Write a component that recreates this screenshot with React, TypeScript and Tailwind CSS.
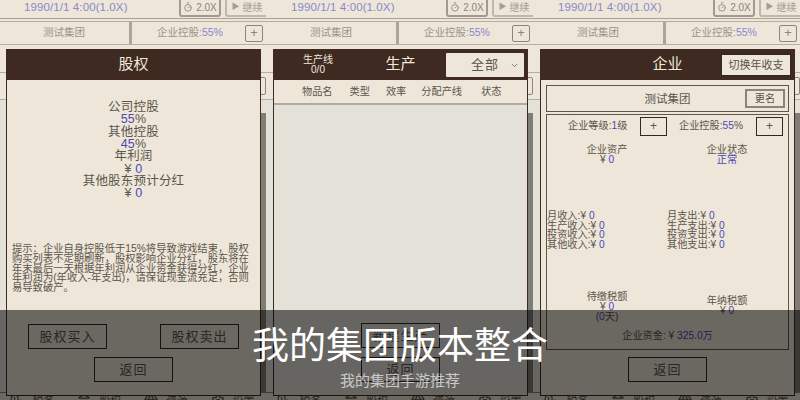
import React from 'react';
import { Timer, ChevronDown, Coins, Landmark, Gem, Settings } from 'lucide-react';

const ink = 'text-[#5c554b]';
const blue = 'text-[#4b48b4]';

const Num: React.FC<{ children: React.ReactNode }> = ({ children }) => <span className={blue}>{children}</span>;

const Money: React.FC<{ value: string }> = ({ value }) => (
  <span>
    ¥<Num> {value}</Num>
  </span>
);

const PageBehind: React.FC = () => (
  <div className="flex flex-col h-full">
    <div className="flex items-start h-[19px] border-b border-[#a8a297] shrink-0">
      <span className="ml-[25px] mt-[1px] text-[11.5px] leading-[12px] tracking-[0.1px] text-[#8a88cc] whitespace-nowrap">1990/1/1 4:00(1.0X)</span>
      <div className="ml-auto flex gap-[4px] -mt-[3px]">
        <div className="w-[42px] h-[20px] border-2 border-[#a09a8f] rounded-[3px] flex items-center justify-center gap-[3px] text-[10px] text-[#8b857a]">
          <Timer size={10} />
          2.0X
        </div>
        <div className="w-[44px] -mr-[3px] h-[20px] border-2 border-[#bdb7ac] rounded-[3px] flex items-center justify-center gap-[3px] text-[10px] text-[#a49e93]">
          <span className="text-[8px]">▶</span>
          继续
        </div>
      </div>
    </div>
    <div className="flex h-[24px] mt-[2px] border-y border-[#b3ada2] shrink-0 text-[10.5px] text-[#9a948a]">
      <div className="w-[132px] flex items-center justify-center border-r-2 border-[#aaa49a]">测试集团</div>
      <div className="flex-1 flex items-center border-l border-[#aaa49a]">
        <span className="ml-[25px] whitespace-nowrap">
          企业控股:<span className="text-[#8a88cc]">55%</span>
        </span>
        <span className="ml-auto mr-[3px] w-[18px] h-[17px] border border-[#8b857a] rounded-[2px] flex items-center justify-center text-[#8b857a] text-[13px]">+</span>
      </div>
    </div>
    <div className="mt-[27px] h-[28px] border-y border-[#b3ada2] shrink-0 flex justify-end items-center">
      <div className="w-[18px] h-[18px] border border-[#8b857a] rounded-[2px]" />
    </div>
    <div className="flex-1 bg-[#e4e1d9] relative min-h-0">
      <div className="absolute right-0 top-[13px] bottom-0 w-[5px] bg-[#807c76]" />
    </div>
    <div className="h-[8px] shrink-0 border-t border-[#8b857a] flex text-[11px] leading-[14px] text-[#5c554b] overflow-hidden">
      {[
        { label: '税务', icon: Coins },
        { label: '股权', icon: Landmark },
        { label: '资源', icon: Gem },
        { label: '设置', icon: Settings },
      ].map(({ label, icon: Icon }) => (
        <div key={label} className="flex-1 flex justify-center gap-[8px] pt-[1px]">
          <Icon size={14} />
          <span>{label}</span>
        </div>
      ))}
    </div>
  </div>
);

const Dialog: React.FC<{ header: React.ReactNode; children: React.ReactNode }> = ({ header, children }) => (
  <div className="absolute left-[7px] top-[49px] w-[255px] h-[347px] border border-[#3e2a20] bg-[#ede6d9] flex flex-col">
    <div className="h-[31px] -mx-px -mt-px bg-[#3e2a20] shrink-0 flex items-center relative text-[#f0e9dc]">{header}</div>
    {children}
  </div>
);

const OutlineButton: React.FC<{ children: React.ReactNode }> = ({ children }) => (
  <div className="w-[79px] h-[25px] border border-[#2b2a26] flex items-center justify-center text-[13px] tracking-[1px] text-[#5c554b]">{children}</div>
);

const EquityDialog: React.FC = () => (
  <Dialog header={<span className="w-full text-center text-[15px]">股权</span>}>
    <div className={`pt-[21px] text-center text-[12.5px] leading-[12.35px] tracking-[0.2px] ${ink}`}>
      <div>公司控股</div>
      <div><Num>55</Num>%</div>
      <div>其他控股</div>
      <div><Num>45</Num>%</div>
      <div>年利润</div>
      <div><Money value="0" /></div>
      <div>其他股东预计分红</div>
      <div><Money value="0" /></div>
    </div>
    <p className={`mt-[44px] px-[5px] text-[10.3px] leading-[9.9px] whitespace-nowrap ${ink}`}>
      提示：企业自身控股低于15%将导致游戏结束，股权<br />
      购买列表不定期刷新，股权影响企业分红，股东将在<br />
      年末最后一天根据年利润从企业资金获得分红，企业<br />
      年利润为(年收入-年支出)，请保证现金流充足，否则<br />
      易导致破产。
    </p>
    <div className="mt-[31px] flex justify-between px-[21px]">
      <OutlineButton>股权买入</OutlineButton>
      <OutlineButton>股权卖出</OutlineButton>
    </div>
    <div className="mt-[8px] flex justify-center">
      <OutlineButton>返回</OutlineButton>
    </div>
  </Dialog>
);

const ProductionDialog: React.FC = () => (
  <Dialog
    header={
      <>
        <div className="absolute left-[25px] w-[40px] text-center text-[10px] leading-[10px]">
          <div>生产线</div>
          <div>0/0</div>
        </div>
        <span className="w-full text-center text-[15px]">生产</span>
        <div className="absolute right-[4px] top-[4px] w-[78px] h-[24px] bg-[#ede6d9] rounded-[1px] flex items-center justify-center text-[13px] tracking-[1px] text-[#5c554b]">
          全部
          <ChevronDown size={9} className="absolute right-[5px]" />
        </div>
      </>
    }
  >
    <div className={`h-[25px] shrink-0 border-b-2 border-[#b0aba1] flex items-center text-[10.2px] whitespace-nowrap ${ink}`}>
      <span className="ml-[28px]">物品名</span>
      <span className="ml-[17px]">类型</span>
      <span className="ml-[16px]">效率</span>
      <span className="ml-[15px]">分配产线</span>
      <span className="ml-[19px]">状态</span>
    </div>
    <div className="flex-1 bg-[#e4e1d9] flex flex-col items-center pt-[218px]">
      <OutlineButton>新建生产</OutlineButton>
      <div className="mt-[9px]">
        <OutlineButton>返回</OutlineButton>
      </div>
    </div>
  </Dialog>
);

const StatLine: React.FC<{ label: string }> = ({ label }) => (
  <div>
    {label}:<Money value="0" />
  </div>
);

const PlusBox: React.FC = () => (
  <span className="w-[27px] h-[19px] border border-[#2b2a26] flex items-center justify-center text-[12px] text-[#5c554b]">+</span>
);

const CompanyDialog: React.FC = () => (
  <Dialog
    header={
      <>
        <span className="w-full text-center text-[15px]">企业</span>
        <div className="absolute right-[4px] top-[5px] w-[70px] h-[22px] bg-[#ede6d9] border border-[#2b2a26] flex items-center justify-center text-[11px] text-[#5c554b] whitespace-nowrap">切换年收支</div>
      </>
    }
  >
    <div className={`flex-1 flex flex-col px-[5px] pt-[5px] text-[10.2px] leading-[10px] ${ink}`}>
      <div className="h-[27px] shrink-0 border border-[#5c554b] flex items-center relative">
        <span className="w-full text-center text-[11.5px]">测试集团</span>
        <span className="absolute right-[3px] top-[3px] w-[40px] h-[19px] border-2 border-[#8b857a] flex items-center justify-center">更名</span>
      </div>
      <div className="h-[236px] mt-[2px] shrink-0 border border-[#5c554b] flex flex-col">
        <div className="flex items-center h-[22px] shrink-0 whitespace-nowrap">
          <span className="ml-[21px] w-[72px]">企业等级:<Num>1</Num>级</span>
          <PlusBox />
          <span className="ml-[12px] w-[77px]">企业控股:<Num>55</Num>%</span>
          <PlusBox />
        </div>
        <div className="flex mt-[8px] text-center">
          <div className="w-[120px]">
            <div>企业资产</div>
            <Money value="0" />
          </div>
          <div className="w-[120px]">
            <div>企业状态</div>
            <Num>正常</Num>
          </div>
        </div>
        <div className="flex mt-[46px] leading-[9.7px] whitespace-nowrap">
          <div className="w-[120px]">
            <StatLine label="月收入" />
            <StatLine label="生产收入" />
            <StatLine label="投资收入" />
            <StatLine label="其他收入" />
          </div>
          <div>
            <StatLine label="月支出" />
            <StatLine label="生产支出" />
            <StatLine label="投资支出" />
            <StatLine label="其他支出" />
          </div>
        </div>
        <div className="flex mt-[42px] text-center">
          <div className="w-[120px]">
            <div>待缴税额</div>
            <Money value="0" />
            <div>(<Num>0</Num>天)</div>
          </div>
          <div className="w-[120px] pt-[4px]">
            <div>年纳税额</div>
            <Money value="0" />
          </div>
        </div>
        <div className="mt-auto mb-[8px] text-center">
          企业资金: ¥<Num> 325.0万</Num>
        </div>
      </div>
      <div className="mt-[7px] flex justify-center">
        <OutlineButton>返回</OutlineButton>
      </div>
    </div>
  </Dialog>
);

const Strip: React.FC<{ children: React.ReactNode }> = ({ children }) => (
  <div className="relative w-[267px] h-[400px] shrink-0 overflow-hidden bg-[#ede6d9]">
    <PageBehind />
    {children}
  </div>
);

const App: React.FC = () => (
  <div className="relative w-[800px] h-[400px] overflow-hidden [font-family:'Liberation_Sans','Noto_Sans_CJK_SC',sans-serif]">
    <div className="flex -ml-px">
      <Strip><EquityDialog /></Strip>
      <Strip><ProductionDialog /></Strip>
      <Strip><CompanyDialog /></Strip>
    </div>
    <div className="absolute left-0 right-0 bottom-0 h-[90px] bg-black/55 flex flex-col items-center">
      <div className="mt-[15px] text-[37px] leading-[44px] text-white whitespace-nowrap">我的集团版本整合</div>
      <div className="mt-[2px] text-[15px] leading-[20px] text-white/65 whitespace-nowrap">我的集团手游推荐</div>
    </div>
  </div>
);

export default App;
